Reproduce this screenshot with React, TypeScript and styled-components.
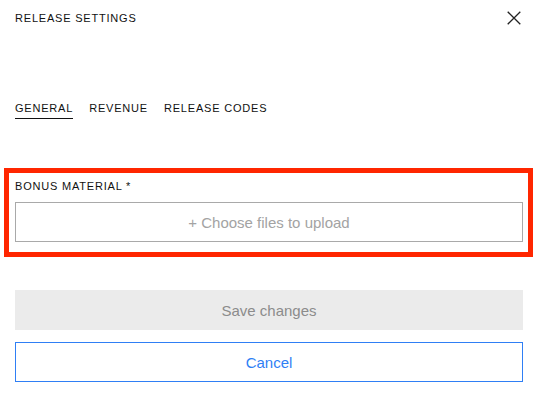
import React from "react";
import styled, { createGlobalStyle } from "styled-components";

const Global = createGlobalStyle`
  html, body { margin: 0; padding: 0; background: #ffffff; }
  body { font-family: "Liberation Sans", Arial, Helvetica, sans-serif; color: #111111; }
  * { box-sizing: border-box; }
`;

const Page = styled.div`
  width: 538px;
  height: 399px;
  padding: 0 15px;
  display: flex;
  flex-direction: column;
`;

const Header = styled.header`
  margin-top: 11px;
  height: 14px;
  display: flex;
  align-items: center;
  justify-content: space-between;
`;

const Title = styled.h1`
  margin: 0;
  font-size: 11px;
  font-weight: 400;
  line-height: 14px;
  letter-spacing: 0.8px;
  text-transform: uppercase;
`;

const CloseButton = styled.button`
  width: 14px;
  height: 14px;
  padding: 0;
  margin-right: 2px;
  border: none;
  background: none;
  display: flex;
  cursor: pointer;
`;

const Tabs = styled.nav`
  margin-top: 76px;
  display: flex;
  gap: 16px;
`;

const Tab = styled.button<{ $active?: boolean }>`
  padding: 0 0 3px;
  border: none;
  border-bottom: 1px solid ${(p) => (p.$active ? "#111111" : "transparent")};
  background: none;
  font-family: inherit;
  font-size: 11px;
  line-height: 14px;
  letter-spacing: 0.8px;
  color: #111111;
  text-transform: uppercase;
  cursor: pointer;
`;

const Highlight = styled.section`
  margin: 49px -10px 0 -11px;
  border: 5px solid #ff2600;
  padding: 6px 5px 10px 6px;
  display: flex;
  flex-direction: column;
`;

const Label = styled.label`
  font-size: 11px;
  line-height: 14px;
  letter-spacing: 0.8px;
  text-transform: uppercase;
  color: #111111;
`;

const UploadBox = styled.button`
  margin-top: 9px;
  height: 40px;
  width: 100%;
  border: 1px solid #a9a9a9;
  background: #ffffff;
  font-family: inherit;
  font-size: 15px;
  color: #a3a3a3;
  cursor: pointer;
`;

const Actions = styled.div`
  margin-top: 33px;
  display: flex;
  flex-direction: column;
  gap: 12px;
`;

const ActionButton = styled.button<{ $variant: "primary" | "secondary" }>`
  height: 40px;
  width: 100%;
  font-family: inherit;
  font-size: 15px;
  cursor: pointer;
  background: ${(p) => (p.$variant === "primary" ? "#ebebeb" : "#ffffff")};
  color: ${(p) => (p.$variant === "primary" ? "#8c8c8c" : "#2f7ff5")};
  border: ${(p) => (p.$variant === "primary" ? "none" : "1px solid #2f7ff5")};
`;

export default function App() {
  return (
    <>
      <Global />
      <Page>
        <Header>
          <Title>Release Settings</Title>
          <CloseButton aria-label="Close">
            <svg width="14" height="14" viewBox="0 0 14 14">
              <path d="M0.7 0.7 L13.3 13.3 M13.3 0.7 L0.7 13.3" stroke="#222" strokeWidth="1.3" fill="none" />
            </svg>
          </CloseButton>
        </Header>
        <Tabs>
          <Tab $active>General</Tab>
          <Tab>Revenue</Tab>
          <Tab>Release codes</Tab>
        </Tabs>
        <Highlight>
          <Label>Bonus material *</Label>
          <UploadBox>+ Choose files to upload</UploadBox>
        </Highlight>
        <Actions>
          <ActionButton $variant="primary" disabled>Save changes</ActionButton>
          <ActionButton $variant="secondary">Cancel</ActionButton>
        </Actions>
      </Page>
    </>
  );
}
